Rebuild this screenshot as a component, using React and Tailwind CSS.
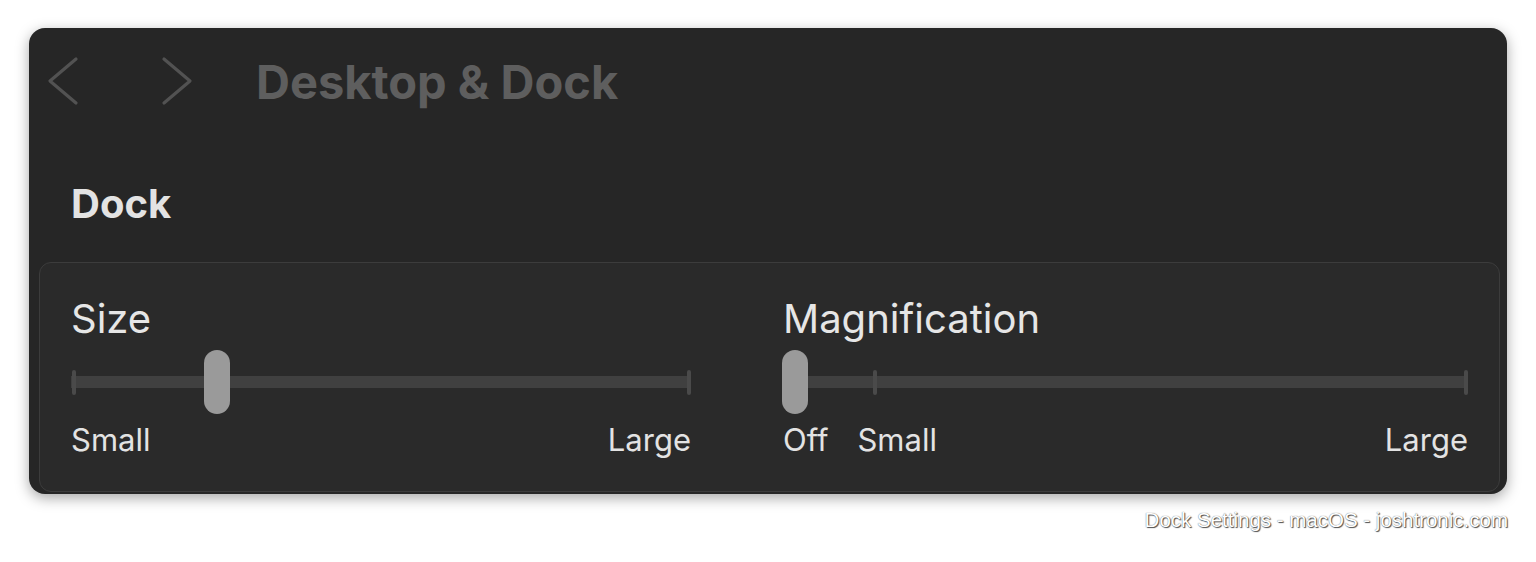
import React from "react";

function Chevron({ dir }) {
  const d = dir === "left" ? "M30 3 L4 25 L30 47" : "M4 3 L30 25 L4 47";
  return (
    <svg width="34" height="50" viewBox="0 0 34 50" fill="none">
      <path d={d} stroke="#525252" strokeWidth="3.2" strokeLinecap="round" strokeLinejoin="round" />
    </svg>
  );
}

function Slider({ thumbLeft, ticks }) {
  return (
    <div className="relative h-[64px] flex items-center">
      <div className="w-full h-[12px] bg-[#404040]" />
      {ticks.map((t, i) => (
        <div
          key={i}
          className="absolute top-[20px] w-[4px] h-[25px] rounded-[2px] bg-[#4a4a4a]"
          style={t.right !== undefined ? { right: t.right } : { left: t.left }}
        />
      ))}
      <div
        className="absolute top-0 w-[26px] h-[64px] rounded-full bg-[#9a9a9a]"
        style={{ left: thumbLeft }}
      />
    </div>
  );
}

export default function App() {
  return (
    <div className="min-h-[562px] bg-white pt-[28px] px-[29px] font-['Inter',sans-serif]">
      <div className="bg-[#262626] rounded-[16px] shadow-[0_4px_14px_rgba(0,0,0,0.35)] pl-[10px] pr-[7px] pb-[2px]">
        <div className="flex items-center pt-[28px] pl-[7px]">
          <Chevron dir="left" />
          <div className="w-[80px]" />
          <Chevron dir="right" />
          <div className="ml-[62px] text-[47px] leading-none font-bold text-[#5e5e5e]">
            Desktop &amp; Dock
          </div>
        </div>
        <div className="pl-[32px] pt-[78px] h-[156px]">
          <div className="text-[40px] leading-none font-bold text-[#e3e3e3]">Dock</div>
        </div>
        <div className="bg-[#2a2a2a] border border-[#3c3c3c] rounded-[12px] pl-[31px] pr-[31px] pt-[36px] pb-[36px] flex gap-[92px]">
          <div className="w-[620px] shrink-0">
            <div className="text-[40px] leading-none text-[#e6e6e6]">Size</div>
            <div className="mt-[11px]">
              <Slider thumbLeft={133} ticks={[{ left: 1 }, { right: 0 }]} />
            </div>
            <div className="mt-[10px] flex justify-between text-[31px] leading-none text-[#e3e3e3]">
              <span>Small</span>
              <span>Large</span>
            </div>
          </div>
          <div className="flex-1">
            <div className="text-[40px] leading-none text-[#e6e6e6]">Magnification</div>
            <div className="mt-[11px]">
              <Slider thumbLeft={-1} ticks={[{ left: 90 }, { right: 0 }]} />
            </div>
            <div className="mt-[10px] flex text-[31px] leading-none text-[#e3e3e3]">
              <span>Off</span>
              <span className="ml-[29px]">Small</span>
              <span className="ml-auto">Large</span>
            </div>
          </div>
        </div>
      </div>
      <div className="mt-[16px] flex justify-end mr-[-1px] text-[20.5px] leading-none text-white font-['Liberation_Sans',sans-serif] [text-shadow:1px_1px_1px_#4a4a4a,0_0_1px_#555]">
        Dock Settings - macOS - joshtronic.com
      </div>
    </div>
  );
}
